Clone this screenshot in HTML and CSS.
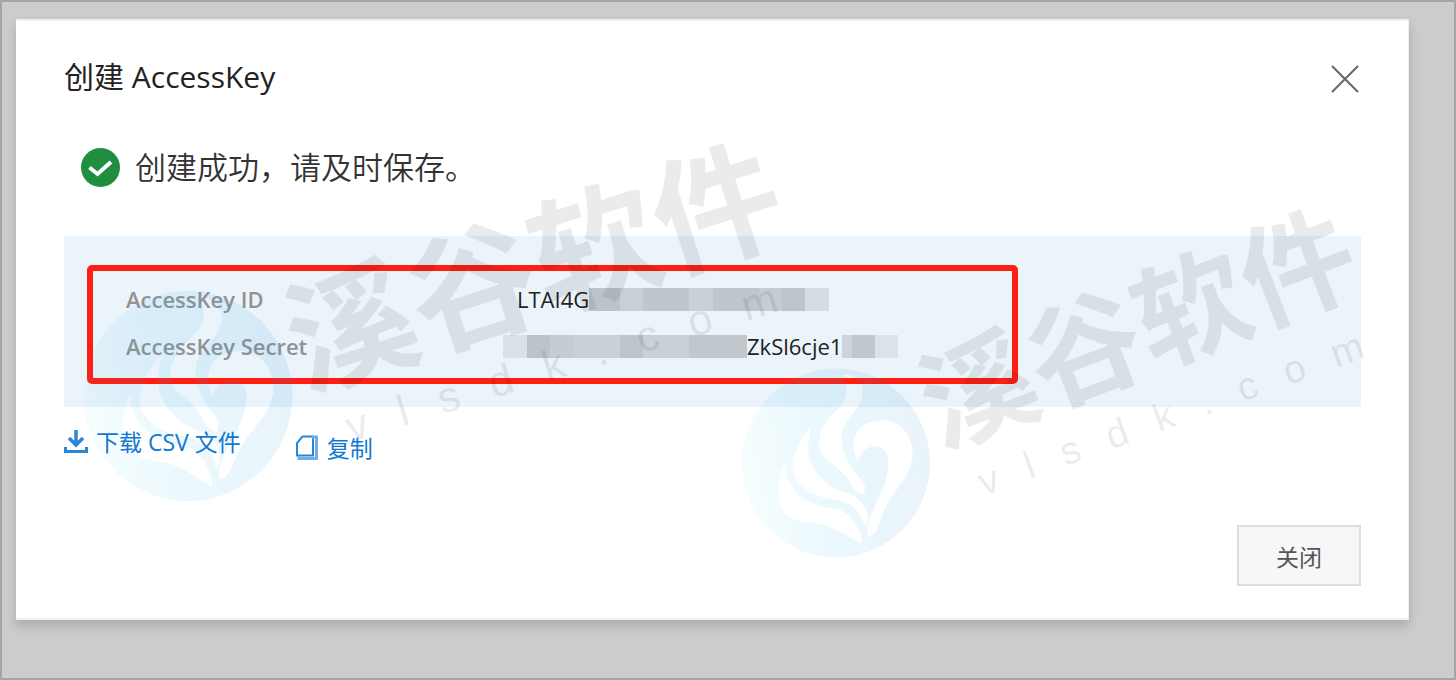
FILE: index.html
```html
<!DOCTYPE html>
<html lang="zh-CN">
<head>
<meta charset="utf-8">
<meta name="viewport" content="width=device-width, initial-scale=1">
<title>创建 AccessKey</title>
<link rel="stylesheet" href="styles.css">
</head>
<body>
<main class="dialog" role="dialog" aria-labelledby="dialog-title">
  <header class="dialog-header">
    <h1 class="dialog-title" id="dialog-title">创建 AccessKey</h1>
    <button class="close-icon" type="button" aria-label="关闭对话框">
      <svg width="28" height="28" viewBox="0 0 28 28"><path d="M1 1L27 27M27 1L1 27" fill="none" stroke="#666" stroke-width="2"/></svg>
    </button>
  </header>

  <p class="message">
    <svg width="40" height="40" viewBox="0 0 40 40"><circle cx="20.500" cy="19.500" r="19.500" fill="#1f8f3f"/><path d="M9.500 19.500L17.500 26L31 14" fill="none" stroke="#fff" stroke-width="4"/></svg>
    <span>创建成功，请及时保存。</span>
  </p>

  <section class="panel">
    <dl class="keys">
      <dt>AccessKey ID</dt>
      <dd class="key-id"><span>LTAI4G</span><i class="mask mask-id"></i></dd>
      <dt>AccessKey Secret</dt>
      <dd><i class="mask mask-start"></i><span>ZkSl6cje1</span><i class="mask mask-end"></i></dd>
    </dl>
  </section>

  <nav class="actions">
    <a class="action" href="#download">
      <svg width="24" height="24" viewBox="0 0 24 24" fill="none" stroke="#2a86d8"><path d="M12 0V15M5 8L12 15L19 8" stroke-width="3.500"/><path d="M1.500 17V21.500H22.500V17" stroke-width="3"/></svg>
      <span>下载 CSV 文件</span>
    </a>
    <a class="action action-copy" href="#copy">
      <svg width="24" height="26" viewBox="0 0 24 26" fill="none" stroke="#2a86d8"><path d="M7.500 1.500H18V20.500H2V8Z" stroke-width="2"/><path d="M17 2H21.500V23.500H4V21" stroke-width="3" stroke="#6fb0e6"/></svg>
      <span>复制</span>
    </a>
  </nav>

  <footer class="dialog-footer">
    <button class="close-button" type="button">关闭</button>
  </footer>
</main>

<svg class="watermark">
  <defs>
    <linearGradient id="tint" x1="0" y1="0.600" x2="1" y2="0.400">
      <stop offset="0" stop-color="#00c8dc" stop-opacity="0.030"/>
      <stop offset="0.400" stop-color="#10b0f0" stop-opacity="0.085"/>
      <stop offset="1" stop-color="#1580d2" stop-opacity="0.095"/>
    </linearGradient>
    <g id="flame">
      <path fill="url(#tint)" fill-rule="evenodd" d="M66 372A282 284 0 0 1 630 372A282 284 0 0 1 66 372Z
        M370 105C390 165 375 190 335 228C295 270 285 325 315 358C350 385 375 402 396 440Q408 460 430 466Q442 440 425 424C398 395 365 350 365 300C366 225 432 220 428 150C424 120 400 108 370 105Z
        M274 260C245 295 215 345 218 388C225 440 270 470 330 480C385 486 410 500 437 563C455 530 435 490 395 467C350 455 330 445 305 418C262 375 256 330 274 260Z
        M193 372C175 410 170 470 185 510C205 540 240 550 290 554C350 562 375 592 425 614C430 580 395 525 355 511C300 500 265 500 225 455C205 430 194 410 193 372Z
        M415 367C385 325 395 245 490 243C550 245 580 300 578 350C568 425 520 450 490 520C475 560 465 597 445 590C435 575 450 530 475 480C495 440 510 395 505 360C500 325 475 320 455 323C430 328 420 345 415 367Z"/>
    </g>
  </defs>
  <use href="#flame" transform="translate(188 396) rotate(3) scale(0.370) translate(-348 -372)"/>
  <text class="mark-name" transform="translate(351 326) rotate(-18)" x="-64" y="48" font-size="128">溪谷软件</text>
  <text class="mark-site" transform="translate(351 442) rotate(-17)" font-size="43">v&#8194;&#8197;l&#8194;&#8197;s&#8194;&#8197;d&#8194;&#8197;k&#8194;&#8197;.&#8194;&#8197;c&#8194;&#8197;o&#8194;&#8197;m</text>
  <use href="#flame" transform="translate(836 463) scale(0.333) translate(-348 -372)"/>
  <text class="mark-name" transform="translate(978 389) rotate(-21)" x="-57" y="43" font-size="114">溪谷软件</text>
  <text class="mark-site" transform="translate(984 496) rotate(-20)" font-size="39">v&#8194;&#8197;l&#8194;&#8197;s&#8194;&#8197;d&#8194;&#8197;k&#8194;&#8197;.&#8194;&#8197;c&#8194;&#8197;o&#8194;&#8197;m</text>
</svg>
</body>
</html>
```
FILE: styles.css
```css
* { box-sizing: border-box; }

body {
  margin: 0;
  min-height: 100vh;
  padding: 17px 45px 58px 14px;
  border: 2px solid #a6a6a6;
  background: #ccc;
  color: #333;
  font-family: "Open Sans", "Noto Sans CJK SC", sans-serif;
}

.dialog {
  padding: 34px 47px 32px 48px;
  border: solid #f0f0f0;
  border-width: 2px 1px 2px 0;
  background: #fff;
  box-shadow: 0 6px 10px rgba(0, 0, 0, 0.16);
}

.dialog-header {
  display: flex;
  align-items: center;
  justify-content: space-between;
  height: 44px;
}

.dialog-title {
  margin: 0;
  color: #222;
  font-size: 30px;
  font-weight: 400;
  line-height: 44px;
}

.close-icon {
  display: flex;
  margin: 4px 2px 0 0;
  padding: 0;
  border: 0;
  background: none;
}

.message {
  display: flex;
  align-items: center;
  gap: 15px;
  margin: 48px 0 48px 16px;
  font-size: 31px;
  font-weight: 350;
  line-height: 41px;
}

.panel {
  padding: 29px 343px 23px 23px;
  background: #ebf3fb;
}

.keys {
  display: grid;
  grid-template-columns: 377px 1fr;
  margin: 0;
  padding: 5px 0 8px 33px;
  border: 6px solid #ff1f12;
  border-radius: 5px;
  font-size: 22px;
  line-height: 47px;
}

.keys dt {
  color: #929292;
  font-weight: 600;
}

.keys dd {
  display: flex;
  align-items: center;
  margin: 0;
  color: #222;
}

.keys .key-id { padding-left: 14px; }

.mask { height: 23px; }

.mask-id {
  width: 240px;
  background: linear-gradient(90deg, #bcc4ca 0 31px, #c8d0d7 0 54px, #bfc6cc 0 100px, #c9d0d8 0 124px, #bfc6ce 0 170px, #c5ccd4 0 193px, #bdc4ca 0 216px, #d5dce4 0);
}

.mask-start {
  width: 244px;
  background: linear-gradient(90deg, #d9e1e8 0 24px, #bdc4c9 0 47px, #c5ccd3 0 70px, #c9d0d8 0 117px, #bec5cb 0 140px, #c9d0d8 0 186px, #c0c7cd 0);
}

.mask-end {
  width: 56px;
  background: linear-gradient(90deg, #cdd4dc 0 10px, #c0c8ce 0 33px, #dae2ea 0);
}

.actions {
  display: flex;
  align-items: flex-start;
  gap: 54px;
  margin-top: 18px;
  font-size: 23px;
  font-weight: 400;
  line-height: 34px;
}

.action {
  display: flex;
  align-items: center;
  gap: 8px;
  color: #1277d1;
  text-decoration: none;
}

.action-copy { margin-top: 6px; }

.dialog-footer {
  display: flex;
  justify-content: flex-end;
  margin-top: 60px;
}

.close-button {
  width: 124px;
  height: 61px;
  border: 2px solid #ddd;
  background: #f7f7f7;
  color: #555;
  font: 400 23px "Noto Sans CJK SC", sans-serif;
}

.watermark {
  position: fixed;
  inset: 0;
  width: 100%;
  height: 100%;
  pointer-events: none;
}

.mark-name {
  fill: rgba(0, 0, 0, 0.08);
  font-family: "Noto Sans CJK SC", sans-serif;
  font-weight: 700;
}

.mark-site {
  fill: rgba(0, 0, 0, 0.08);
  font-family: "Liberation Sans", sans-serif;
}
```
